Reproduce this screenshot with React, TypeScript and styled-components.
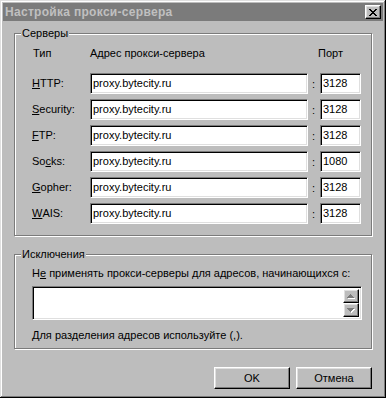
import { Fragment } from 'react';
import styled, { createGlobalStyle } from 'styled-components';

const FACE = '#bdbdbd';

const GlobalStyle = createGlobalStyle`
  html, body {
    margin: 0;
    padding: 0;
    background: ${FACE};
  }
  body {
    font-family: "Liberation Sans", Arial, sans-serif;
    font-size: 11px;
    color: #000;
  }
`;

const Window = styled.div`
  width: 386px;
  height: 398px;
  box-sizing: border-box;
  padding: 3px;
  background: ${FACE};
  box-shadow: inset -1px -1px #000, inset 1px 1px #dfdfdf,
    inset -2px -2px #7b7b7b, inset 2px 2px #fff;
  display: flex;
  flex-direction: column;
`;

const TitleBar = styled.div`
  height: 18px;
  background: #7b7b7b;
  display: flex;
  align-items: center;
  justify-content: space-between;
  padding: 0 2px 0 2px;
`;

const Title = styled.span`
  color: #c0c0c0;
  font-weight: bold;
  font-size: 12px;
  letter-spacing: 0.3px;
`;

const Raised = `
  box-sizing: border-box;
  background: ${FACE};
  border: 1px solid;
  border-color: #fff #000 #000 #fff;
  box-shadow: inset -1px -1px #7b7b7b, inset 1px 1px #dfdfdf;
`;

const CloseButton = styled.div`
  ${Raised}
  width: 16px;
  height: 14px;
  display: flex;
  align-items: center;
  justify-content: center;
`;

const Body = styled.div`
  flex: 1;
  display: flex;
  flex-direction: column;
  padding: 12px 11px 0 11px;
`;

const Group = styled.div<{ $top?: number }>`
  position: relative;
  border: 1px solid #7b7b7b;
  box-shadow: inset 1px 1px #fff, 1px 1px #fff;
  margin-top: ${(p) => p.$top ?? 0}px;
`;

const GroupTitle = styled.span`
  position: absolute;
  top: -7px;
  left: 6px;
  padding: 0 1px;
  line-height: 13px;
  background: ${FACE};
`;

const ServersContent = styled.div`
  display: grid;
  grid-template-columns: 58px 218px 12px 41px;
  grid-auto-rows: 21px;
  row-gap: 5px;
  padding: 13px 10px 11px 17px;
`;

const HeaderCell = styled.div<{ $shift?: number }>`
  line-height: 13px;
  align-self: start;
  margin-left: ${(p) => p.$shift ?? 0}px;
  margin-bottom: -2px;
`;

const RowLabel = styled.label`
  display: flex;
  align-items: center;
  padding-bottom: 1px;
`;

const Colon = styled.span`
  display: flex;
  align-items: center;
  justify-content: center;
  padding-right: 1px;
`;

const Sunken = `
  box-sizing: border-box;
  background: #fff;
  border: 1px solid;
  border-color: #7b7b7b #fff #fff #7b7b7b;
  box-shadow: inset 1px 1px #000, inset -1px -1px #dfdfdf;
`;

const Field = styled.input`
  ${Sunken}
  width: 100%;
  height: 21px;
  margin: 0;
  padding: 0 0 1px 2px;
  font: inherit;
  color: #000;
  outline: none;
`;

const Key = styled.span`
  text-decoration: underline;
  text-underline-offset: 1px;
`;

const ExceptContent = styled.div`
  display: flex;
  flex-direction: column;
  padding: 12px 10px 6px 17px;
`;

const Line = styled.div<{ $top?: number }>`
  line-height: 13px;
  margin-top: ${(p) => p.$top ?? 0}px;
`;

const Memo = styled.div`
  ${Sunken}
  margin-top: 6px;
  width: 330px;
  height: 34px;
  padding: 2px;
  display: flex;
  justify-content: flex-end;
`;

const ScrollBar = styled.div`
  width: 16px;
  display: flex;
  flex-direction: column;
`;

const ScrollButton = styled.div`
  ${Raised}
  height: 15px;
  display: flex;
  align-items: center;
  justify-content: center;
`;

const Buttons = styled.div`
  display: flex;
  justify-content: flex-end;
  gap: 6px;
  margin-top: 18px;
`;

const PushButton = styled.button`
  ${Raised}
  width: 76px;
  height: 22px;
  margin: 0;
  padding: 0 0 1px;
  font: inherit;
  font-size: 11px;
  color: #000;
`;

const CloseGlyph = () => (
  <svg width="8" height="7" viewBox="0 0 8 7" shapeRendering="crispEdges">
    <path
      d="M0 0h2v1H0zM6 0h2v1H6zM1 1h2v1H1zM5 1h2v1H5zM2 2h4v1H2zM3 3h2v1H3zM2 4h4v1H2zM1 5h2v1H1zM5 5h2v1H5zM0 6h2v1H0zM6 6h2v1H6z"
      fill="#000"
    />
  </svg>
);

const Arrow = ({ down }: { down?: boolean }) => {
  const d = down ? 'M0 0h7v1H0zM1 1h5v1H1zM2 2h3v1H2zM3 3h1v1H3z' : 'M3 0h1v1H3zM2 1h3v1H2zM1 2h5v1H1zM0 3h7v1H0z';
  return (
    <svg width="8" height="5" viewBox="0 0 8 5" shapeRendering="crispEdges">
      <path d={d} fill="#fff" transform="translate(1 1)" />
      <path d={d} fill="#7b7b7b" />
    </svg>
  );
};

const proxies = [
  { pre: '', key: 'H', post: 'TTP:', port: '3128' },
  { pre: '', key: 'S', post: 'ecurity:', port: '3128' },
  { pre: '', key: 'F', post: 'TP:', port: '3128' },
  { pre: 'So', key: 'c', post: 'ks:', port: '1080' },
  { pre: '', key: 'G', post: 'opher:', port: '3128' },
  { pre: '', key: 'W', post: 'AIS:', port: '3128' },
];

export default function App() {
  return (
    <>
      <GlobalStyle />
      <Window>
        <TitleBar>
          <Title>Настройка прокси-сервера</Title>
          <CloseButton>
            <CloseGlyph />
          </CloseButton>
        </TitleBar>
        <Body>
          <Group>
            <GroupTitle>Серверы</GroupTitle>
            <ServersContent>
              <HeaderCell $shift={1}>Тип</HeaderCell>
              <HeaderCell>Адрес прокси-сервера</HeaderCell>
              <HeaderCell />
              <HeaderCell $shift={-2}>Порт</HeaderCell>
              {proxies.map((p) => (
                <Fragment key={p.key}>
                  <RowLabel>
                    {p.pre}
                    <Key>{p.key}</Key>
                    {p.post}
                  </RowLabel>
                  <Field readOnly value="proxy.bytecity.ru" />
                  <Colon>:</Colon>
                  <Field readOnly value={p.port} />
                </Fragment>
              ))}
            </ServersContent>
          </Group>
          <Group $top={18}>
            <GroupTitle>Исключения</GroupTitle>
            <ExceptContent>
              <Line>
                Н<Key>е</Key> применять прокси-серверы для адресов, начинающихся с:
              </Line>
              <Memo>
                <ScrollBar>
                  <ScrollButton>
                    <Arrow />
                  </ScrollButton>
                  <ScrollButton>
                    <Arrow down />
                  </ScrollButton>
                </ScrollBar>
              </Memo>
              <Line $top={9}>Для разделения адресов используйте (,).</Line>
            </ExceptContent>
          </Group>
          <Buttons>
            <PushButton>OK</PushButton>
            <PushButton>Отмена</PushButton>
          </Buttons>
        </Body>
      </Window>
    </>
  );
}
